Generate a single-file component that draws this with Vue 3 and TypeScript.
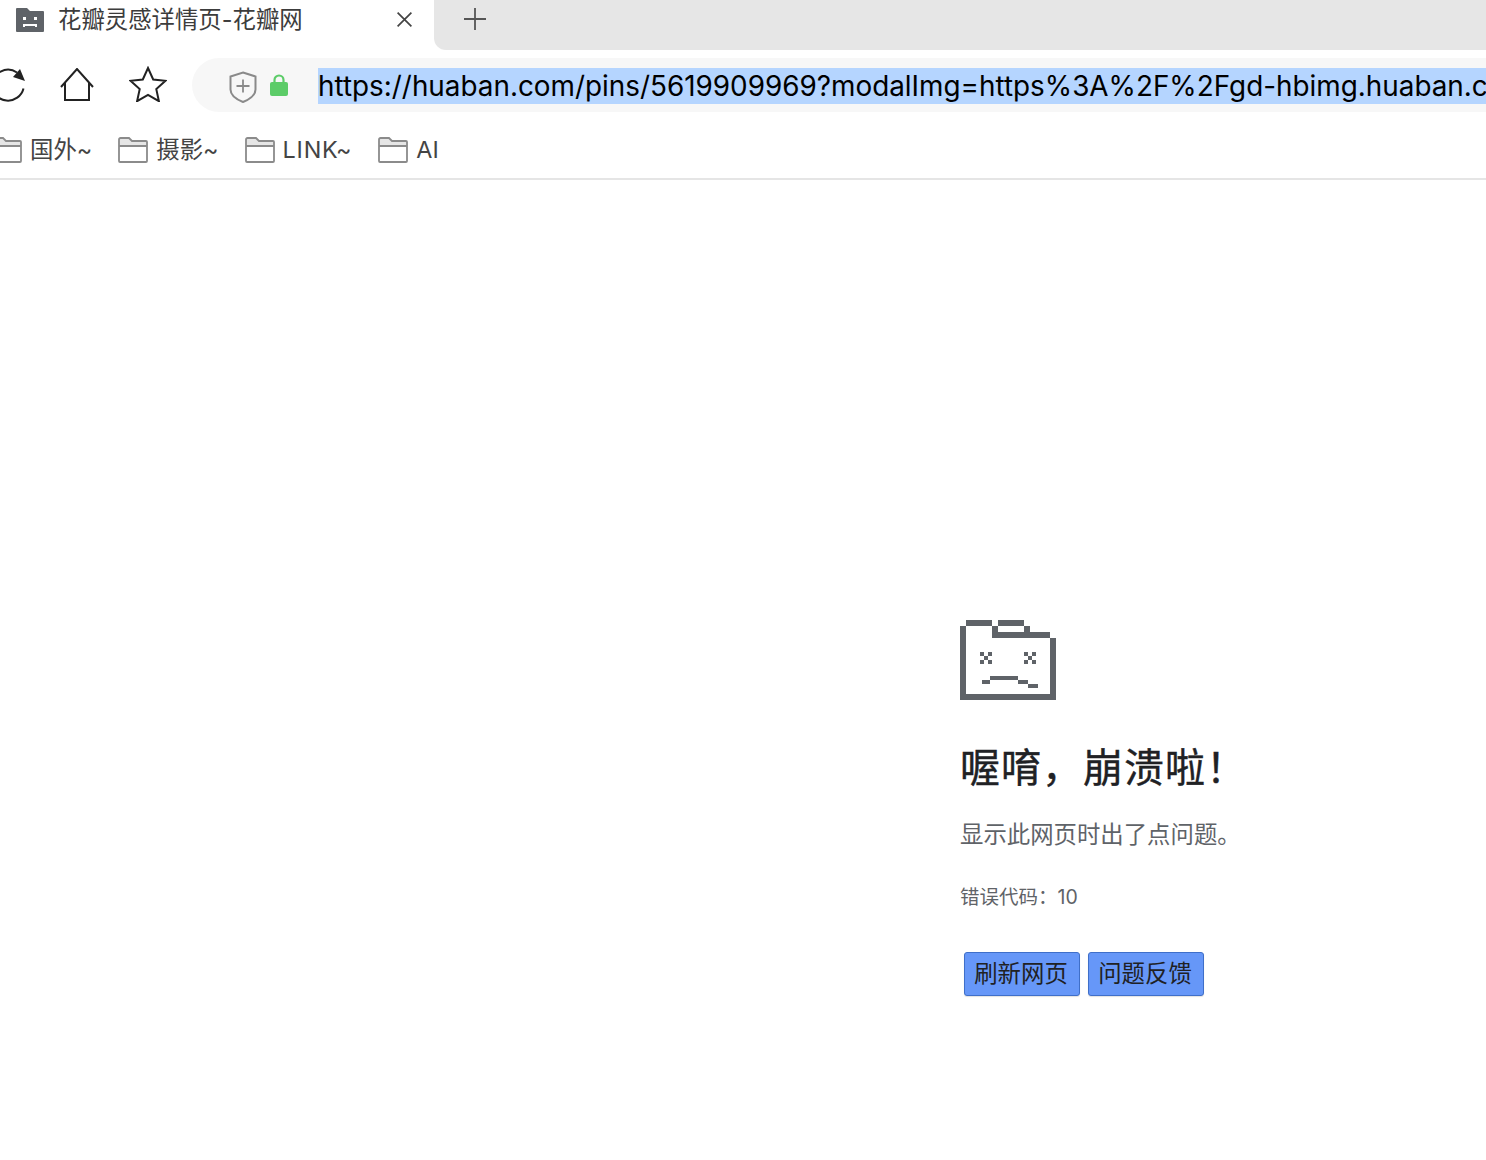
<script setup lang="ts">
const url = 'https://huaban.com/pins/5619909969?modalImg=https%3A%2F%2Fgd-hbimg.huaban.com%2Fabcdef'
const bookmarks: { label: string; first?: boolean; latin?: boolean }[] = [
  { label: '国外~', first: true },
  { label: '摄影~' },
  { label: 'LINK~', latin: true },
  { label: 'AI' }
]
const sadRects: number[][] = [
  [0, 6, 6, 74], [0, 74, 96, 6], [90, 18, 6, 62], [6, 0, 26, 6], [38, 0, 26, 6],
  [32, 6, 6, 12], [64, 6, 6, 6], [32, 12, 58, 6],
  [20, 32, 4, 4], [28, 32, 4, 4], [24, 36, 4, 4], [20, 40, 4, 4], [28, 40, 4, 4],
  [64, 32, 4, 4], [72, 32, 4, 4], [68, 36, 4, 4], [64, 40, 4, 4], [72, 40, 4, 4],
  [22, 60, 8, 4], [30, 56, 28, 4], [58, 60, 10, 4], [68, 64, 10, 4]
]
</script>

<template>
  <div class="page">
    <header class="tabstrip">
      <div class="tab">
        <svg class="favicon" width="28" height="24" viewBox="0 0 28 24">
          <path d="M1 0h10l3 3h13a1 1 0 0 1 1 1v19a1 1 0 0 1-1 1H1a1 1 0 0 1-1-1V1a1 1 0 0 1 1-1z" fill="#5f6368" />
          <rect x="7" y="9" width="3" height="3" fill="#fff" />
          <rect x="18" y="9" width="3" height="3" fill="#fff" />
          <path d="M8 19v-2h12v2" fill="none" stroke="#fff" stroke-width="2" />
        </svg>
        <span class="tab-title">花瓣灵感详情页-花瓣网</span>
        <svg class="tab-close" width="15" height="15" viewBox="0 0 15 15">
          <path d="M.6.6l13.800 13.800M14.400.6L.6 14.400" stroke="#444" stroke-width="1.700" fill="none" />
        </svg>
      </div>
      <div class="tab-rest">
        <svg class="tab-plus" width="22" height="22" viewBox="0 0 22 22">
          <path d="M11 0v22M0 11h22" stroke="#555" stroke-width="1.800" fill="none" />
        </svg>
      </div>
    </header>

    <div class="toolbar">
      <svg class="reload" width="25" height="36" viewBox="0 0 25 36">
        <path d="M-8 18.500A16 16 0 0 1 17 5.500" fill="none" stroke="#222" stroke-width="2" />
        <path d="M23.500 21.500A16 16 0 0 1 -8 18.500" fill="none" stroke="#222" stroke-width="2" />
        <path d="M20 2l5 12-12-4z" fill="#222" />
      </svg>
      <svg class="home" width="34" height="33" viewBox="0 0 34 33">
        <path d="M1 19L17 1l16 18M5 15v17h24V15" fill="none" stroke="#222" stroke-width="2" />
      </svg>
      <svg class="star" width="38" height="36" viewBox="0 0 38 36">
        <path d="M19 2l5.200 11.500 12.300 1.300-9.200 8.300 2.600 12.100L19 29l-10.900 6.200 2.600-12.100-9.200-8.300 12.300-1.300z" fill="none" stroke="#222" stroke-width="2" />
      </svg>
      <div class="omnibox">
        <svg class="shield" width="28" height="32" viewBox="0 0 28 32">
          <path d="M14 1.500l12.500 4v13c0 5.500-5 9.500-12.500 12.500C6.500 28 1.500 24 1.500 18.500v-13z" fill="none" stroke="#8a8a8a" stroke-width="2" />
          <path d="M14 8.500v13M7.500 15h13" stroke="#8a8a8a" stroke-width="1.800" fill="none" />
        </svg>
        <svg class="lock" width="18" height="22" viewBox="0 0 18 22">
          <path d="M4.500 9V6a4.500 4.500 0 0 1 9 0v3" fill="none" stroke="#5ccc68" stroke-width="2.200" />
          <rect x="0" y="8" width="18" height="14" rx="2" fill="#5ccc68" />
        </svg>
        <div class="url"><span class="url-selected">{{ url }}</span></div>
      </div>
    </div>

    <nav class="bookmarks">
      <div v-for="b in bookmarks" :key="b.label" class="bookmark">
        <svg class="folder" :width="b.first ? 22 : 30" height="26" :viewBox="b.first ? '8 0 22 26' : '0 0 30 26'">
          <path d="M1 9V2.500A1.500 1.500 0 0 1 2.500 1H11l3 3h14.500A1.500 1.500 0 0 1 30 5.500V9z" fill="#e6e6e6" />
          <path d="M1 2.500A1.500 1.500 0 0 1 2.500 1H11l3 3h14a1 1 0 0 1 1 1v19a1 1 0 0 1-1 1H2a1 1 0 0 1-1-1zM1 9h28" fill="none" stroke="#8b8b8b" stroke-width="1.800" />
        </svg>
        <span class="bookmark-label" :class="{ latin: b.latin }">{{ b.label }}</span>
      </div>
    </nav>

    <main class="error">
      <svg class="sad" width="96" height="80" viewBox="0 0 96 80">
        <rect v-for="(r, i) in sadRects" :key="i" :x="r[0]" :y="r[1]" :width="r[2]" :height="r[3]" fill="#5f6368" />
      </svg>
      <h1 class="title">喔唷，崩溃啦！</h1>
      <p class="message">显示此网页时出了点问题。</p>
      <p class="code">错误代码：10</p>
      <div class="actions">
        <button class="btn" type="button">刷新网页</button>
        <button class="btn" type="button">问题反馈</button>
      </div>
    </main>
  </div>
</template>

<style scoped>
.page {
  width: 1486px;
  height: 1160px;
  overflow: hidden;
  background: #fff;
  font-family: Inter, "Noto Sans CJK SC", sans-serif;
}
.tabstrip {
  display: flex;
  height: 50px;
}
.tab {
  width: 434px;
  flex: none;
  display: flex;
  align-items: center;
  padding: 0 22px 0 16px;
  box-sizing: border-box;
  height: 40px;
}
.favicon { flex: none; }
.tab-title {
  margin-left: 14px;
  font-size: 23.4px;
  line-height: 40px;
  color: #3c3c3c;
  white-space: nowrap;
}
.tab-close { margin-left: auto; flex: none; margin-top: -2px; }
.tab-rest {
  flex: 1;
  background: #e6e6e6;
  border-bottom-left-radius: 12px;
  display: flex;
  padding: 8px 0 0 30px;
}
.tab-plus { flex: none; }
.toolbar {
  display: flex;
  align-items: center;
  height: 54px;
  margin-top: 8px;
  margin-bottom: 16px;
}
.reload { flex: none; }
.home { flex: none; margin-left: 35px; margin-bottom: 2px; }
.star { flex: none; margin-left: 35px; margin-bottom: 3px; }
.omnibox {
  flex: 1;
  min-width: 0;
  height: 54px;
  margin-left: 25px;
  display: flex;
  align-items: center;
  padding-left: 37px;
  background: #f7f7f7;
  border-radius: 27px 0 0 27px;
}
.shield { flex: none; margin-top: 4px; }
.lock { flex: none; margin-left: 13px; }
.url {
  margin: 2px 0 0 30px;
  flex: 1;
  min-width: 0;
  height: 36px;
  overflow: hidden;
  white-space: nowrap;
  font-size: 27.86px;
  line-height: 36px;
  color: #000;
}
.url-selected {
  display: inline-block;
  height: 36px;
  background: #b5d5ff;
}
.bookmarks {
  display: flex;
  align-items: center;
  height: 50px;
  border-bottom: 2px solid #e5e5e5;
  gap: 26px;
}
.bookmark {
  display: flex;
  align-items: center;
  gap: 8px;
  height: 26px;
  margin-top: -6px;
}
.folder { flex: none; }
.bookmark-label {
  font-size: 23.4px;
  line-height: 26px;
  color: #444;
  white-space: nowrap;
}
.latin { letter-spacing: 0.8px; }
.error {
  padding: 440px 0 0 960px;
}
.sad { display: block; }
.title {
  margin: 40px 0 0;
  font-size: 40px;
  line-height: 56px;
  font-weight: 400;
  letter-spacing: 1px;
  -webkit-text-stroke: 0.4px #202124;
  color: #202124;
}
.message {
  margin: 24px 0 0;
  font-size: 23.4px;
  line-height: 30px;
  color: #5f6368;
}
.code {
  margin: 34px 0 0;
  font-size: 19.500px;
  line-height: 26px;
  color: #5f6368;
}
.actions {
  display: flex;
  gap: 8px;
  margin: 42px 0 0 4px;
}
.btn {
  width: 116px;
  height: 44px;
  padding: 0 2px 4px 0;
  box-sizing: border-box;
  background: #6697f8;
  border: 1px solid #3f6fc9;
  border-radius: 3px;
  box-shadow: 0 1px 1px rgba(0, 0, 0, 0.12);
  font-family: inherit;
  font-size: 23.4px;
  color: #202124;
}
</style>
